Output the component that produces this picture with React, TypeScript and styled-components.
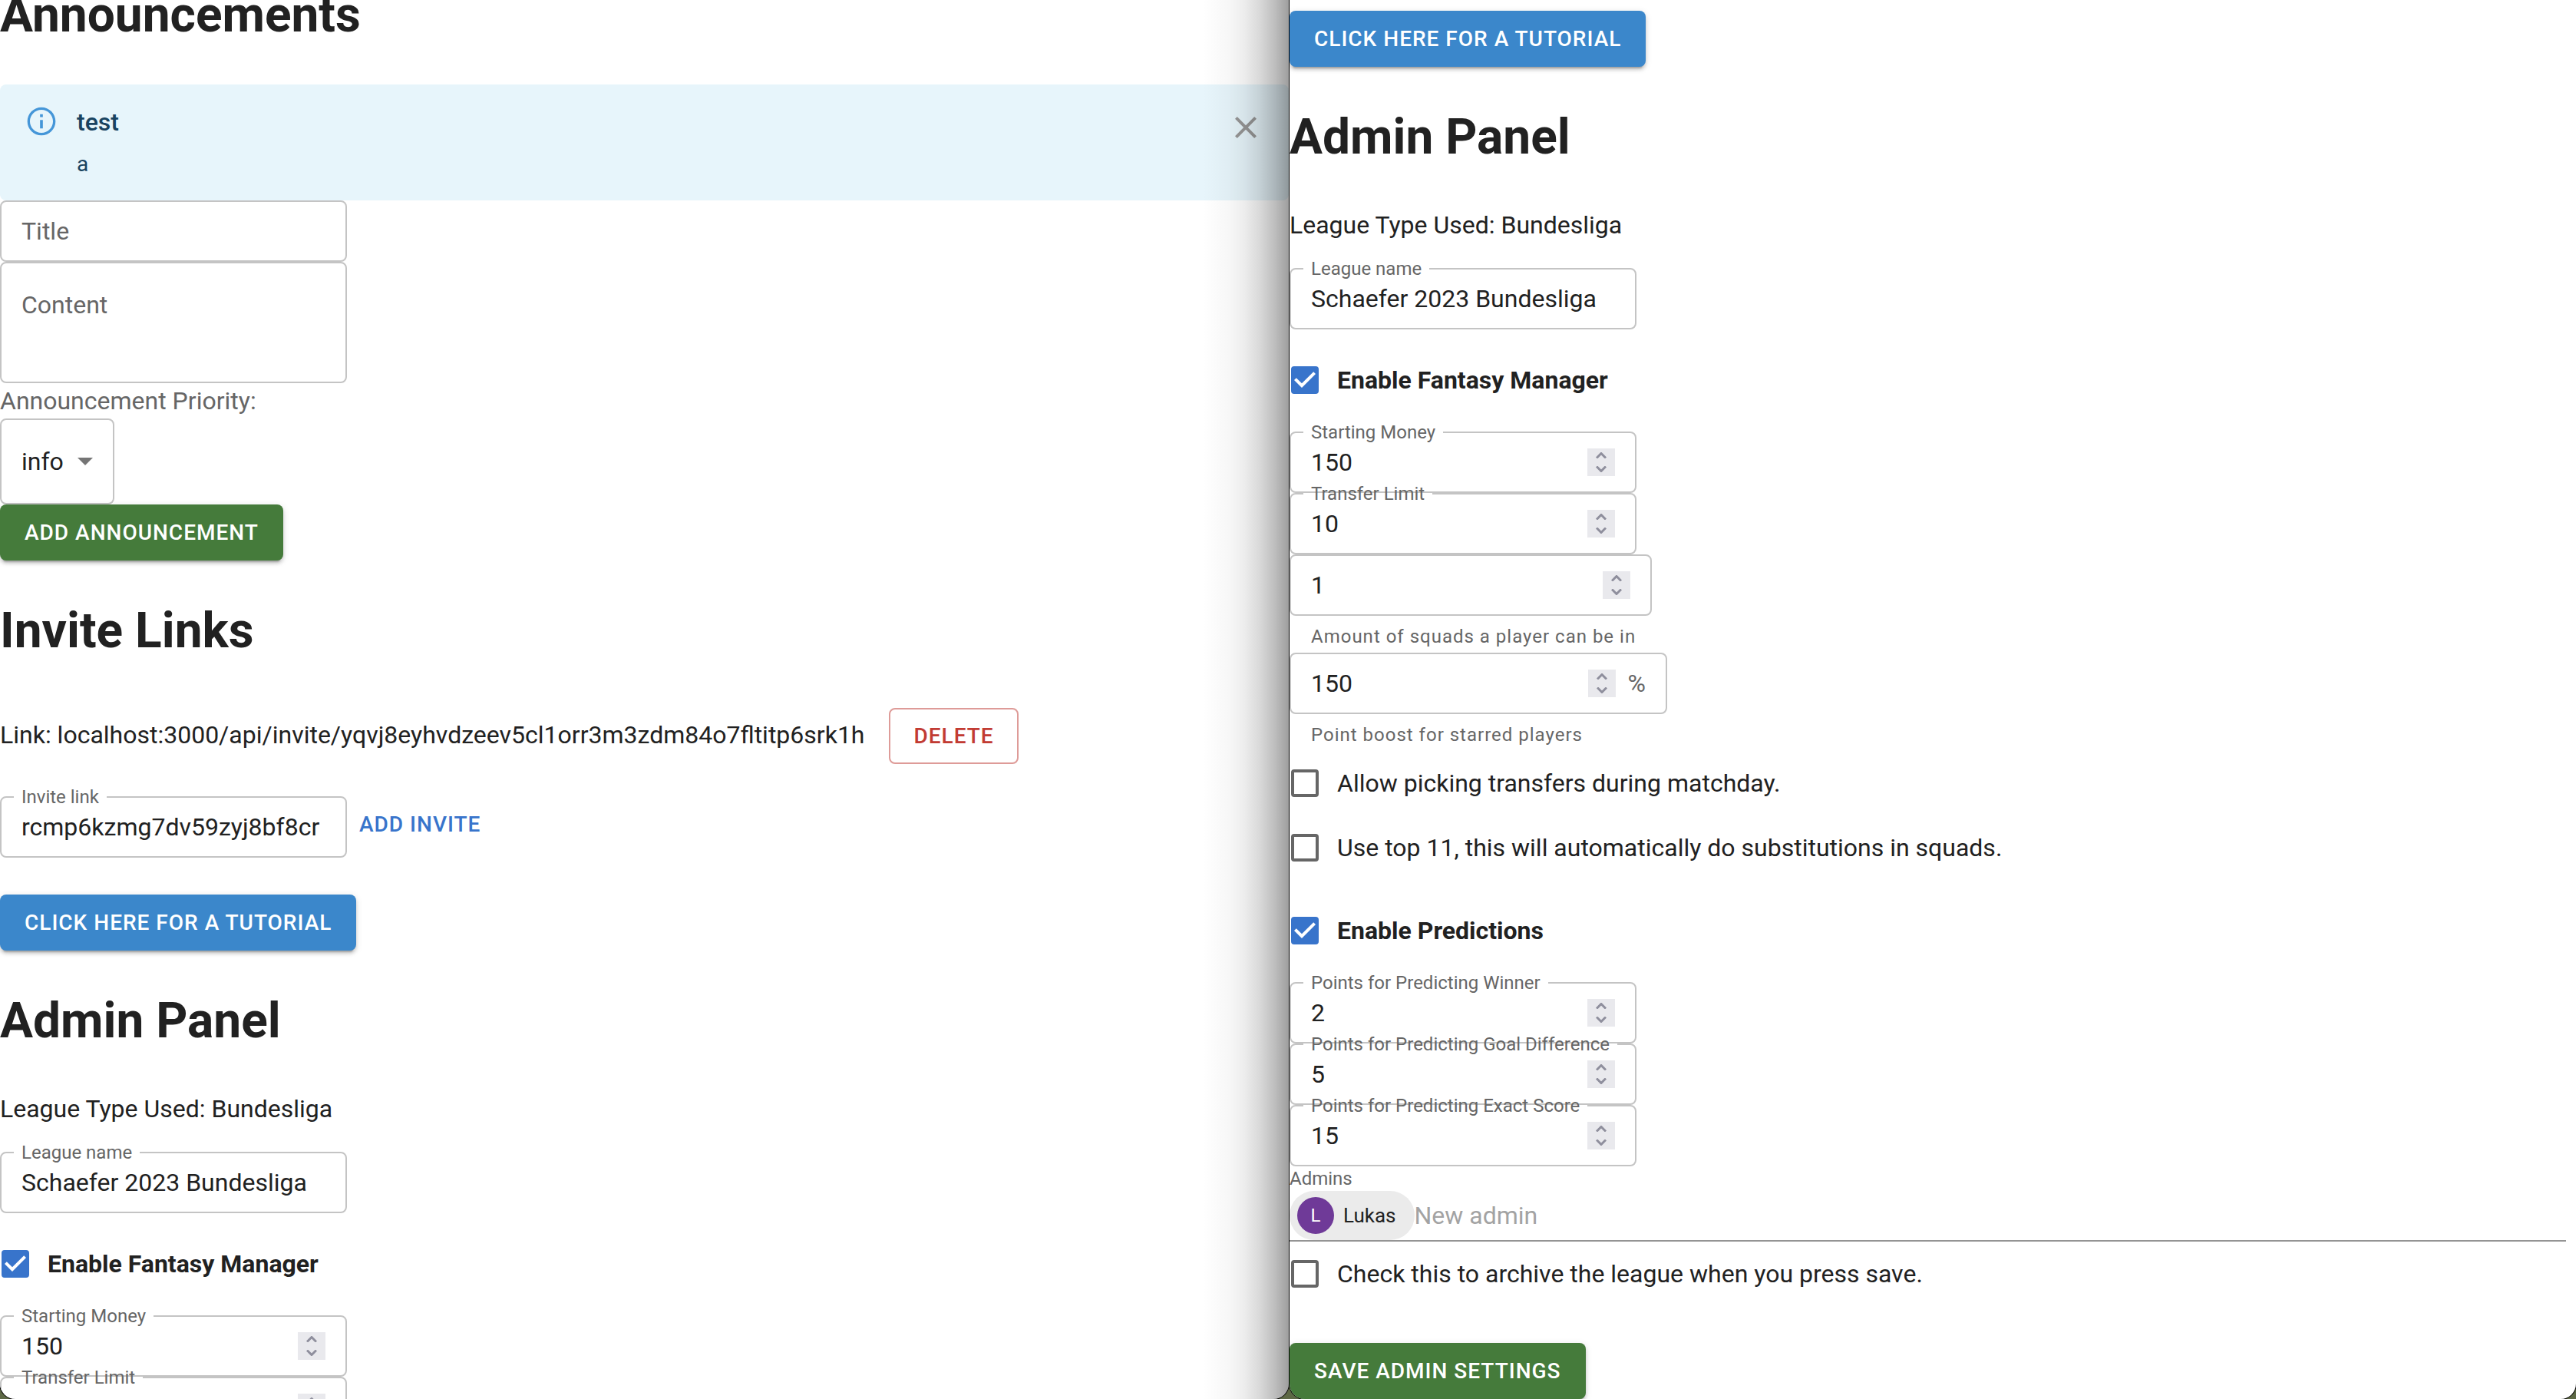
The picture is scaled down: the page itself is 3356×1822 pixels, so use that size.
import React, { useId, useState } from 'react';
import styled, { createGlobalStyle, css } from 'styled-components';

const color = {
  text: '#212121',
  muted: '#666666',
  outline: '#c4c4c4',
  primary: '#3874cb',
  info: '#3b87cb',
  success: '#457b3b',
  error: '#c23b33',
};

const GlobalStyle = createGlobalStyle`
  *, *::before, *::after { box-sizing: border-box; }
  body {
    margin: 0;
    background: #5d6845;
    color: ${color.text};
    font-family: Roboto, "Liberation Sans", sans-serif;
    font-size: 32px;
    line-height: 48px;
  }
  input, textarea, select, button { font: inherit; color: inherit; margin: 0; }
`;

const Desktop = styled.div`
  display: grid;
  grid-template-columns: calc(50% + 1px) minmax(0, 1fr);
  column-gap: 1px;
  height: 100vh;
  overflow: hidden;
`;

const Window = styled.main<{ $gutter?: number }>`
  position: relative;
  min-width: 0;
  height: 100%;
  padding-right: ${(p) => p.$gutter ?? 0}px;
  overflow: hidden;
  background: #fff;
  border-radius: 0 0 20px 20px;
  box-shadow: 0 0 0 1px #000;
`;

const Scrolled = styled.div<{ $offset: number }>`
  margin-top: ${(p) => p.$offset}px;
`;

/* Shade that the front window casts on the one behind it */
const WindowShade = styled.div`
  position: absolute;
  top: 0;
  right: 0;
  bottom: 0;
  width: 112px;
  pointer-events: none;
  background: linear-gradient(
    to right,
    rgba(0, 0, 0, 0) 0%,
    rgba(0, 0, 0, 0.03) 30%,
    rgba(0, 0, 0, 0.07) 48%,
    rgba(0, 0, 0, 0.15) 66%,
    rgba(0, 0, 0, 0.26) 84%,
    rgba(0, 0, 0, 0.38) 100%
  );
`;

const Heading = styled.h1`
  margin: 44px 0 42px;
  font-size: 64px;
  line-height: 96px;
  font-weight: 700;
`;

const FirstHeading = styled(Heading)`
  margin-top: 0;
`;

const Paragraph = styled.p`
  margin: 0;
`;

const Alert = styled.div`
  display: flex;
  padding: 12px 32px;
  border-radius: 8px;
  background: #e7f5fb;
  color: #194360;
`;

const AlertIcon = styled.svg`
  flex: none;
  width: 44px;
  height: 44px;
  margin: 14px 24px 0 0;
  fill: #4596d8;
`;

const AlertMessage = styled.div`
  flex: 1;
  padding: 13px 0 15px;
  font-size: 28px;
  line-height: 40px;
`;

const AlertTitle = styled.div`
  margin-bottom: 11px;
  font-size: 32px;
  line-height: 48px;
  font-weight: 500;
`;

const IconButton = styled.button`
  flex: none;
  display: flex;
  align-self: flex-start;
  margin: 4px -16px 0 0;
  padding: 16px;
  border: 0;
  background: none;
  color: #979797;

  svg {
    width: 48px;
    height: 48px;
    fill: currentColor;
  }
`;

const buttonBase = css`
  display: inline-block;
  padding: 12px 32px;
  border: 0;
  border-radius: 8px;
  font-size: 28px;
  line-height: 49px;
  font-weight: 500;
  letter-spacing: 1px;
  text-transform: uppercase;
  text-decoration: none;
  white-space: nowrap;
  cursor: pointer;
`;

const raised = css`
  color: #fff;
  box-shadow:
    0 6px 2px -4px rgba(0, 0, 0, 0.2),
    0 4px 4px 0 rgba(0, 0, 0, 0.14),
    0 2px 10px 0 rgba(0, 0, 0, 0.12);
`;

const SuccessButton = styled.button`
  ${buttonBase}
  ${raised}
  background: ${color.success};
`;

const InfoLink = styled.a`
  ${buttonBase}
  ${raised}
  background: ${color.info};
`;

const DeleteButton = styled.button`
  ${buttonBase}
  padding: 10px 30px;
  border: 2px solid #de9b98;
  background: none;
  color: ${color.error};
`;

const TextButton = styled.button`
  ${buttonBase}
  padding: 12px 16px;
  background: none;
  color: ${color.primary};
`;

const Block = styled.div`
  display: flex;
  align-items: flex-start;
`;

const SpacedBlock = styled(Block)`
  margin-top: 48px;
`;

const InviteRow = styled.div`
  display: flex;
  align-items: baseline;
  gap: 32px;
  margin: 52px 0 42px;
`;

const InviteHeading = styled(Heading)`
  margin-bottom: 0;
`;

const Outline = styled.fieldset<{ $extra?: number }>`
  display: block;
  width: ${(p) => 452 + (p.$extra ?? 0)}px;
  height: 80px;
  min-width: 0;
  margin: 0;
  padding: 0;
  border: 2px solid ${color.outline};
  border-radius: 8px;
`;

const Legend = styled.legend`
  height: 2px;
  margin-left: 16px;
  padding: 0 10px;
  color: ${color.muted};
  font-size: 24px;
  line-height: 2px;
  white-space: nowrap;
`;

const FieldRow = styled.div`
  display: flex;
  align-items: center;
  gap: 16px;
  height: 76px;
  padding: 0 26px;
`;

const TextInput = styled.input`
  flex: 1;
  min-width: 0;
  width: 100%;
  height: 46px;
  padding: 0;
  border: 0;
  outline: 0;
  background: none;
  appearance: textfield;

  &::-webkit-inner-spin-button,
  &::-webkit-outer-spin-button {
    appearance: none;
    margin: 0;
  }
  &::placeholder {
    color: ${color.muted};
    opacity: 1;
  }
`;

const Stepper = styled.span`
  flex: none;
  display: grid;
  width: 36px;
  height: 36px;
  background: #e9e9ed;
`;

const StepButton = styled.button`
  display: grid;
  place-items: center;
  height: 18px;
  padding: 0;
  border: 0;
  background: none;

  svg {
    width: 14px;
    height: 8px;
    fill: none;
    stroke: #8f8f9d;
    stroke-width: 3;
  }
`;

const Adornment = styled.span`
  color: ${color.muted};
`;

const Helper = styled.p`
  margin: 6px 28px 0;
  color: ${color.muted};
  font-size: 24px;
  line-height: 42px;
  letter-spacing: 1px;
`;

const ContentArea = styled.textarea`
  display: block;
  width: 452px;
  height: 158px;
  padding: 31px 26px;
  border: 2px solid ${color.outline};
  border-radius: 8px;
  outline: 0;
  line-height: 46px;
  resize: none;

  &::placeholder {
    color: ${color.muted};
    opacity: 1;
  }
`;

const SelectLabel = styled.label`
  display: block;
  color: ${color.muted};
  line-height: 46px;
`;

const SelectBox = styled.div`
  display: inline-grid;
  align-items: center;
  vertical-align: top;

  > * {
    grid-area: 1 / 1;
  }
  svg {
    justify-self: end;
    width: 20px;
    height: 10px;
    margin-right: 28px;
    fill: #757575;
    pointer-events: none;
  }
`;

const Select = styled.select`
  height: 112px;
  padding: 0 64px 0 26px;
  border: 2px solid ${color.outline};
  border-radius: 8px;
  outline: 0;
  background: none;
  appearance: none;
`;

const CheckLabel = styled.label<{ $strong?: boolean }>`
  display: flex;
  align-items: center;
  gap: 18px;
  height: 84px;
  margin: ${(p) => (p.$strong ? '24px 0 25px -4px' : '0 0 0 -4px')};
  font-weight: ${(p) => (p.$strong ? 700 : 400)};
`;

const CheckBox = styled.span`
  display: grid;
  place-items: center;
  width: 48px;
  height: 48px;

  > * {
    grid-area: 1 / 1;
  }
  input {
    width: 36px;
    height: 36px;
    border: 4px solid ${color.muted};
    border-radius: 4px;
    appearance: none;
  }
  input:checked {
    border-color: ${color.primary};
    background: ${color.primary};
  }
  svg {
    width: 48px;
    height: 48px;
    fill: none;
    pointer-events: none;
  }
  input:checked + svg {
    fill: #fff;
  }
`;

const AdminsLabel = styled.label`
  display: block;
  color: ${color.muted};
  font-size: 24px;
  line-height: 32px;
`;

const AdminsRow = styled.div`
  display: flex;
  align-items: center;
  border-bottom: 2px solid #949494;
`;

const Chip = styled.span`
  display: flex;
  align-items: center;
  gap: 12px;
  height: 64px;
  padding: 0 24px 0 10px;
  border-radius: 32px;
  background: #ebebeb;
  font-size: 26px;
`;

const Avatar = styled.span`
  width: 48px;
  height: 48px;
  border-radius: 50%;
  background: #6f3a98;
  color: #fff;
  font-size: 24px;
  text-align: center;
`;

const AdminInput = styled(TextInput)`
  &::placeholder {
    color: #a3a3a3;
  }
`;

type FieldProps = {
  label?: string;
  hint?: string;
  name: string;
  value?: string;
  numeric?: boolean;
  suffix?: string;
  helper?: string;
  extra?: number;
};

function Field({ label, hint, name, value = '', numeric, suffix, helper, extra }: FieldProps) {
  const id = useId();
  const [current, setCurrent] = useState(value);
  const step = (by: number) => setCurrent(String(Number(current) + by));
  return (
    <>
      <Outline $extra={extra}>
        {label && (
          <Legend>
            <label htmlFor={id}>{label}</label>
          </Legend>
        )}
        <FieldRow>
          <TextInput
            id={id}
            type={numeric ? 'number' : 'text'}
            aria-label={label ? undefined : name}
            placeholder={hint}
            value={current}
            onChange={(e) => setCurrent(e.target.value)}
          />
          {numeric && (
            <Stepper>
              <StepButton type="button" aria-label={`Increase ${name}`} onClick={() => step(1)}>
                <svg viewBox="0 0 14 8"><path d="M1 7.5 7 1.5 13 7.5" /></svg>
              </StepButton>
              <StepButton type="button" aria-label={`Decrease ${name}`} onClick={() => step(-1)}>
                <svg viewBox="0 0 14 8"><path d="M1 .5 7 6.5 13 .5" /></svg>
              </StepButton>
            </Stepper>
          )}
          {suffix && <Adornment>{suffix}</Adornment>}
        </FieldRow>
      </Outline>
      {helper && <Helper>{helper}</Helper>}
    </>
  );
}

function Check({ label, checked, strong }: { label: string; checked?: boolean; strong?: boolean }) {
  return (
    <CheckLabel $strong={strong}>
      <CheckBox>
        <input type="checkbox" defaultChecked={checked} />
        <svg viewBox="0 0 24 24" aria-hidden="true">
          <path d="M10 17l-5-5 1.41-1.41L10 14.17l7.59-7.59L19 8z" />
        </svg>
      </CheckBox>
      {label}
    </CheckLabel>
  );
}

function Announcements() {
  return (
    <>
      <FirstHeading>Announcements</FirstHeading>
      <Alert role="alert">
        <AlertIcon viewBox="0 0 24 24" aria-hidden="true">
          <path d="M11 7h2v2h-2zm0 4h2v6h-2zm1-9C6.48 2 2 6.48 2 12s4.48 10 10 10 10-4.48 10-10S17.52 2 12 2zm0 18.2c-4.52 0-8.2-3.68-8.2-8.2S7.48 3.8 12 3.8s8.2 3.68 8.2 8.2-3.68 8.2-8.2 8.2z" />
        </AlertIcon>
        <AlertMessage>
          <AlertTitle>test</AlertTitle>
          <div>a</div>
        </AlertMessage>
        <IconButton type="button" aria-label="Close">
          <svg viewBox="0 0 24 24">
            <path d="M19 6.41 17.59 5 12 10.59 6.41 5 5 6.41 10.59 12 5 17.59 6.41 19 12 13.41 17.59 19 19 17.59 13.41 12z" />
          </svg>
        </IconButton>
      </Alert>
      <Field name="Title" hint="Title" />
      <ContentArea aria-label="Content" placeholder="Content" rows={2} />
      <SelectLabel htmlFor="priority">Announcement Priority:</SelectLabel>
      <SelectBox>
        <Select id="priority" defaultValue="info">
          <option value="info">info</option>
        </Select>
        <svg viewBox="0 0 20 10" aria-hidden="true"><path d="M0 0h20L10 10z" /></svg>
      </SelectBox>
      <Block>
        <SuccessButton type="button">Add announcement</SuccessButton>
      </Block>
    </>
  );
}

function InviteLinks() {
  return (
    <>
      <InviteHeading>Invite Links</InviteHeading>
      <InviteRow>
        <Paragraph>Link: localhost:3000/api/invite/yqvj8eyhvdzeev5cl1orr3m3zdm84o7fltitp6srk1h</Paragraph>
        <DeleteButton type="button">Delete</DeleteButton>
      </InviteRow>
      <Block>
        <div>
          <Field label="Invite link" name="invite link" value="rcmp6kzmg7dv59zyj8bf8cr" />
        </div>
        <TextButton type="button">Add invite</TextButton>
      </Block>
    </>
  );
}

const LeagueField = styled.div`
  margin-top: 32px;
`;

function AdminIntro() {
  return (
    <>
      <Heading>Admin Panel</Heading>
      <Paragraph>League Type Used: Bundesliga</Paragraph>
      <LeagueField>
        <Field label="League name" name="league name" value="Schaefer 2023 Bundesliga" />
      </LeagueField>
      <Check label="Enable Fantasy Manager" checked strong />
      <Field label="Starting Money" name="starting money" value="150" numeric />
      <Field label="Transfer Limit" name="transfer limit" value="10" numeric />
    </>
  );
}

function AdminDetails() {
  return (
    <>
      <Field name="squads per player" value="1" numeric extra={20} helper="Amount of squads a player can be in" />
      <Field name="star bonus" value="150" numeric suffix="%" extra={40} helper="Point boost for starred players" />
      <Check label="Allow picking transfers during matchday." />
      <Check label="Use top 11, this will automatically do substitutions in squads." />
      <Check label="Enable Predictions" checked strong />
      <Field label="Points for Predicting Winner" name="winner points" value="2" numeric />
      <Field label="Points for Predicting Goal Difference" name="difference points" value="5" numeric />
      <Field label="Points for Predicting Exact Score" name="exact points" value="15" numeric />
      <AdminsLabel htmlFor="admins">Admins</AdminsLabel>
      <AdminsRow>
        <Chip>
          <Avatar>L</Avatar>
          Lukas
        </Chip>
        <AdminInput id="admins" placeholder="New admin" />
      </AdminsRow>
      <Check label="Check this to archive the league when you press save." />
      <SpacedBlock>
        <SuccessButton type="button">Save admin settings</SuccessButton>
      </SpacedBlock>
    </>
  );
}

export default function App() {
  return (
    <>
      <GlobalStyle />
      <Desktop>
        <Window>
          <Scrolled $offset={-28}>
            <Announcements />
            <InviteLinks />
            <SpacedBlock>
              <InfoLink href="#tutorial">Click here for a tutorial</InfoLink>
            </SpacedBlock>
            <AdminIntro />
          </Scrolled>
          <WindowShade />
        </Window>
        <Window $gutter={13}>
          <Scrolled $offset={14}>
            <Block>
              <InfoLink href="#tutorial">Click here for a tutorial</InfoLink>
            </Block>
            <AdminIntro />
            <AdminDetails />
          </Scrolled>
        </Window>
      </Desktop>
    </>
  );
}
